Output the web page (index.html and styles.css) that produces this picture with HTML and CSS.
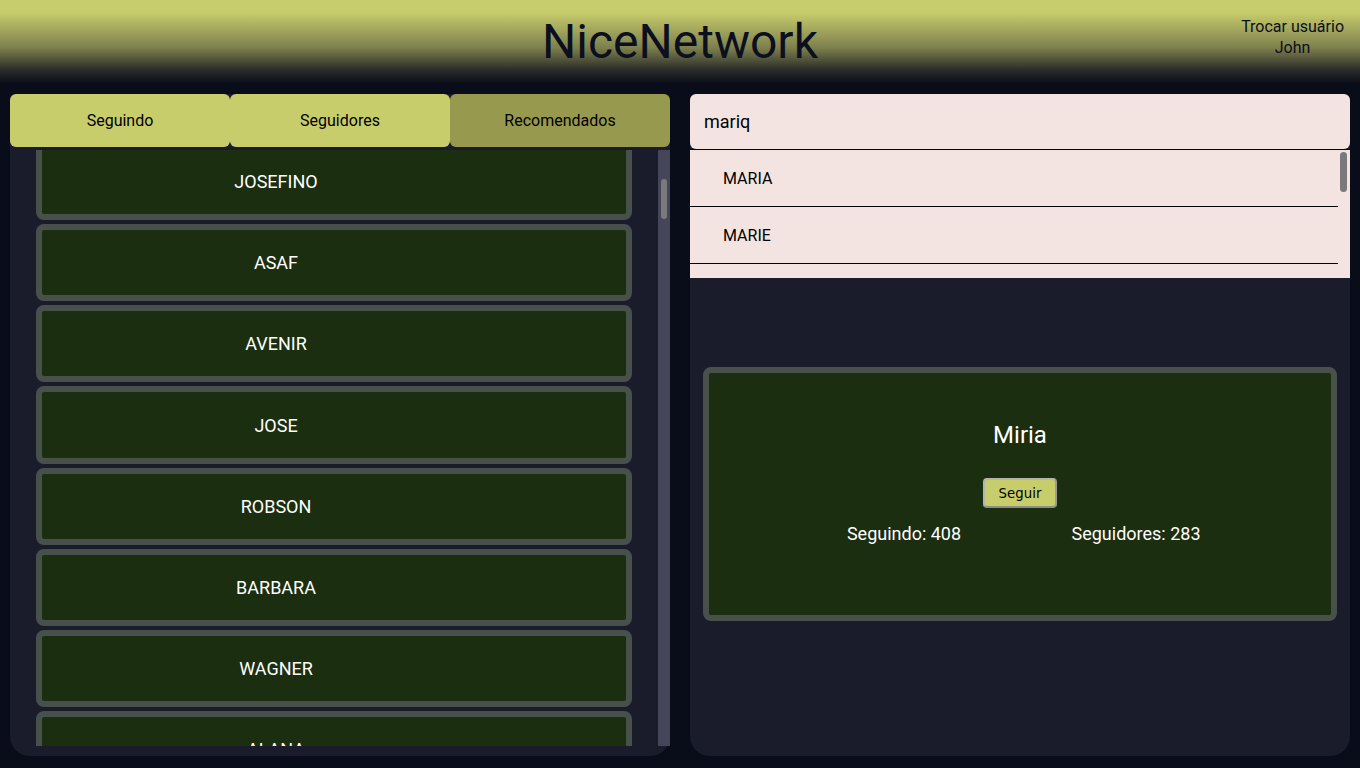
FILE: index.html
```html
<!DOCTYPE html>
<html lang="pt-BR">
<head>
<meta charset="utf-8">
<title>NiceNetwork</title>
<link rel="stylesheet" href="styles.css">
</head>
<body>
<header class="topbar">
  <div class="spacer"></div>
  <h1 class="brand">NiceNetwork</h1>
  <div class="user">
    <div>Trocar usuário</div>
    <div>John</div>
  </div>
</header>
<main class="main">
  <section class="panel left">
    <nav class="tabs">
      <button class="tab">Seguindo</button>
      <button class="tab">Seguidores</button>
      <button class="tab active">Recomendados</button>
    </nav>
    <div class="list-row">
      <div class="list">
        <div class="list-inner">
          <div class="card">JOSEFINO</div>
          <div class="card">ASAF</div>
          <div class="card">AVENIR</div>
          <div class="card">JOSE</div>
          <div class="card">ROBSON</div>
          <div class="card">BARBARA</div>
          <div class="card">WAGNER</div>
          <div class="card">ALANA</div>
          <div class="card">CARLOS</div>
        </div>
      </div>
      <div class="track dark"><div class="thumb"></div></div>
    </div>
  </section>
  <section class="panel right">
    <div class="search">mariq</div>
    <div class="dropdown">
      <div class="options">
        <div class="option">MARIA</div>
        <div class="option">MARIE</div>
        <div class="option">MARIANA</div>
      </div>
      <div class="track light"><div class="thumb"></div></div>
    </div>
    <div class="profile">
      <div class="profile-name">Miria</div>
      <button class="follow">Seguir</button>
      <div class="stats">
        <span>Seguindo: 408</span>
        <span>Seguidores: 283</span>
      </div>
    </div>
  </section>
</main>
</body>
</html>
```
FILE: styles.css
```css
* { box-sizing: border-box; }
html, body { margin: 0; padding: 0; }
body {
  width: 1360px;
  height: 768px;
  overflow: hidden;
  background: #090c19;
  font-family: Roboto, "Liberation Sans", sans-serif;
  color: #000;
}
.topbar {
  height: 84px;
  display: grid;
  grid-template-columns: 1fr auto 1fr;
  background: linear-gradient(to bottom, #c8cd6c 0px, #c8cd6c 12px, #7d7f4d 48px, #2a2c2a 70px, #090c19 84px);
}
.brand {
  margin: 0;
  font-weight: 400;
  font-size: 48px;
  line-height: 84px;
  color: #0b0f1e;
  height: 84px;
}
.user {
  justify-self: end;
  padding: 16px 16px 0 0;
  text-align: center;
  font-size: 16px;
  line-height: 21px;
  color: #0b0f1e;
}
.main {
  display: flex;
  gap: 20px;
  padding: 10px 10px 12px;
  height: 684px;
}
.panel {
  flex: 1;
  background: #1a1c2b;
  display: flex;
  flex-direction: column;
  min-height: 0;
}
.left { border-radius: 20px; padding-bottom: 10px; }
.right { border-radius: 6px 6px 20px 20px; }
.tabs {
  display: flex;
  height: 53px;
  flex: none;
}
.tab {
  flex: 1;
  border: none;
  border-radius: 6px;
  background: #c8cd6c;
  font-family: Roboto, "Liberation Sans", sans-serif;
  font-size: 16px;
  color: #000;
  padding: 0;
}
.tab.active { background: #979a4e; }
.list-row {
  flex: 1;
  display: flex;
  margin-top: 3px;
  min-height: 0;
}
.list {
  flex: 1;
  overflow: hidden;
  padding: 0 26px;
}
.list-inner {
  margin-top: -7px;
  display: flex;
  flex-direction: column;
  gap: 4px;
}
.card {
  height: 77.17px;
  flex: none;
  border: 6px solid #47504b;
  border-radius: 8px;
  background: #1b2e0f;
  color: #fff;
  font-size: 18px;
  display: flex;
  align-items: center;
  justify-content: center;
  padding-right: 116px;
}
.track {
  width: 12px;
  flex: none;
}
.track.dark { background: #45465a; }
.track.dark .thumb { margin: 29px 0 0 3px; height: 40px; }
.thumb {
  width: 6px;
  border-radius: 3px;
  background: #7a7a7c;
}
.search {
  height: 55px;
  flex: none;
  background: #f4e4e1;
  border-radius: 6px;
  padding-left: 14px;
  font-size: 18px;
  line-height: 55px;
  color: #000;
}
.dropdown {
  height: 129px;
  flex: none;
  display: flex;
  background: #f4e4e1;
  border-top: 1.5px solid #000;
  overflow: hidden;
}
.options { flex: 1; }
.option {
  height: 57px;
  border-bottom: 1px solid #000;
  padding: 1px 0 0 33px;
  font-size: 16px;
  line-height: 56px;
  color: #000;
}
.track.light { background: #f4e4e1; }
.track.light .thumb { margin: 2px 0 0 2px; height: 40px; width: 7px; border-radius: 4px; }
.profile {
  margin: 89px 13px 0;
  height: 254px;
  flex: none;
  border: 6px solid #47504b;
  border-radius: 8px;
  background: #1b2e0f;
  color: #fff;
  display: flex;
  flex-direction: column;
  align-items: center;
  padding-top: 48px;
}
.profile-name {
  font-size: 24px;
  line-height: 28px;
}
.follow {
  margin-top: 29px;
  height: 30px;
  padding: 0 14px;
  background: #c8cd6c;
  border: 2px solid #b4b6aa;
  border-bottom-color: #8d8e84;
  border-right-color: #9c9d92;
  border-radius: 4px;
  font-family: "DejaVu Sans", sans-serif;
  font-size: 13.33px;
  color: #000;
}
.stats {
  margin-top: 15px;
  display: grid;
  grid-template-columns: 232px 232px;
  text-align: center;
  font-size: 18px;
  line-height: 22px;
}
```
